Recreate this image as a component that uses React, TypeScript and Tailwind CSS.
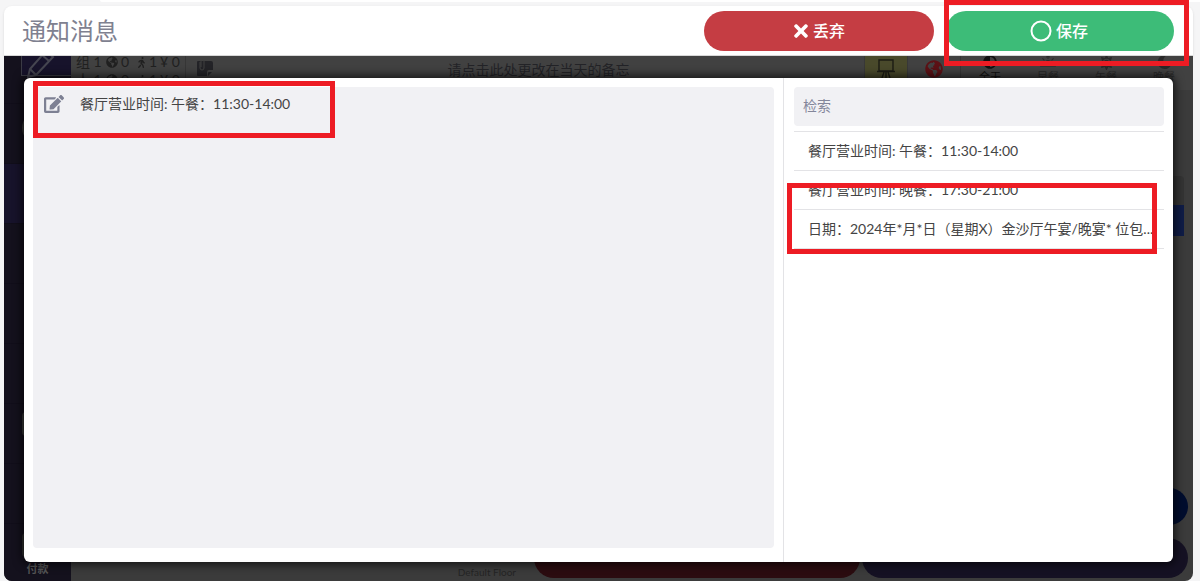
import { useState } from 'react';
import type { ReactNode } from 'react';
import { FaAdjust, FaEdit, FaGlobeAmericas, FaMoon, FaSun, FaTimes, FaWalking } from 'react-icons/fa';
import { BsSunriseFill } from 'react-icons/bs';

const MESSAGES = [
  '餐厅营业时间: 午餐：11:30-14:00',
  '餐厅营业时间: 晚餐：17:30-21:00',
  '日期：2024年*月*日（星期X）金沙厅午宴/晚宴* 位包...',
];

const MEALS = [
  { label: '全天', icon: <FaAdjust size={14} />, active: true },
  { label: '早餐', icon: <BsSunriseFill size={16} />, active: false },
  { label: '午餐', icon: <FaSun size={15} />, active: false },
  { label: '晚餐', icon: <FaMoon size={14} />, active: false },
];

function PencilIcon() {
  return (
    <svg className="h-8 w-8" viewBox="0 0 32 32" fill="none" stroke="currentColor" strokeWidth={2}>
      <path d="M4 29l2-8L22 3l7 6-17 18-8 2z" />
      <path d="M6 21l6 6M18 7l7 6" />
    </svg>
  );
}

function MemoIcon() {
  return (
    <svg className="h-[18px] w-4" viewBox="0 0 16 18">
      <path d="M1 2h13a2 2 0 012 2v7h-4a2 2 0 00-2 2v4H1a1 1 0 01-1-1V3a1 1 0 011-1z" fill="currentColor" />
      <path d="M11 17v-3a1 1 0 011-1h3z" fill="currentColor" />
      <path d="M3 3v6a2 2 0 004 0V2a1.500 1.500 0 00-3 0v6" fill="none" stroke="#414141" strokeWidth={1} />
    </svg>
  );
}

function EaselIcon() {
  return (
    <svg className="h-5 w-5" viewBox="0 0 20 20" fill="none" stroke="currentColor" strokeWidth={1.400}>
      <path d="M3 2h14v11H3zM1 13.500h18M8 14l-2 6M12 14l2 6M10 14v6" />
    </svg>
  );
}

function SidebarItem({ children, active }: { children?: ReactNode; active?: boolean }) {
  return (
    <div className={`flex h-[60px] shrink-0 flex-col items-center justify-center border-b border-[#110e1a] ${active ? 'bg-[#17132b]' : ''}`}>
      {children}
    </div>
  );
}

function Sidebar() {
  return (
    <nav className="flex w-[67px] shrink-0 flex-col overflow-hidden bg-[#14111d] text-[#3b3b3b]">
      <div className="h-12 shrink-0 border-b border-[#110e1a]">
        <div className="ml-[17px] h-7 border-b border-l border-[#3b3b45] bg-[#17132b] pl-[2px] text-[#454550]">
          <div className="-mt-2">
            <PencilIcon />
          </div>
        </div>
      </div>
      <SidebarItem>
        <div className="mb-3 h-8 w-8 rounded-full border-4 border-current" />
      </SidebarItem>
      <SidebarItem active />
      <SidebarItem />
      <SidebarItem />
      <SidebarItem />
      <SidebarItem>
        <div className="mb-5 h-6 w-8 rounded border-2 border-current" />
      </SidebarItem>
      <SidebarItem />
      <div className="flex flex-1 flex-col items-center justify-end pb-1 text-[11px] leading-4 font-bold text-[#555]">
        <div className="mb-1 h-6 w-8 rounded border-2 border-[#333]" />
        付款
      </div>
    </nav>
  );
}

function CounterRow({ label, values }: { label: string; values: [string, string, string] }) {
  return (
    <div className="grid grid-cols-[30px_30px_24px_20px] items-center text-[14px] leading-[10px]">
      <span>{label} {values[0]}</span>
      <span className="flex items-center gap-[3px]">
        <FaGlobeAmericas size={12} /> {values[1]}
      </span>
      <span className="flex items-center gap-[2px]">
        <FaWalking size={11} /> {values[2]}
      </span>
      <span>¥ 0</span>
    </div>
  );
}

function Topbar() {
  return (
    <div className="flex h-[34px] shrink-0 bg-[#414141]">
      <div className="flex w-[115px] shrink-0 flex-col gap-[6px] border-r border-[#363636] pl-[5px] text-[#202020]">
        <CounterRow label="组" values={['1', '0', '1']} />
        <CounterRow label="人" values={['1', '0', '1']} />
      </div>
      <div className="shrink-0 pt-[3px] pl-[11px] text-[#232327]">
        <MemoIcon />
      </div>
      <p className="flex-1 pt-1 text-center text-[14px] leading-5 text-[#232327]">请点击此处更改在当天的备忘</p>
      <div className="flex w-11 shrink-0 justify-center border-x border-[#383838] bg-[#49492b] pt-[2px] text-[#1c1c14]">
        <EaselIcon />
      </div>
      <div className="flex w-[53px] shrink-0 justify-center border-r border-[#363636] pt-1 text-[#5c1115]">
        <FaGlobeAmericas size={18} />
      </div>
      <div className="flex shrink-0">
        {MEALS.map(m => (
          <div
            key={m.label}
            className={`flex w-[58px] flex-col items-center text-[11px] leading-4 ${m.active ? 'text-[#111]' : 'text-[#292929]'}`}
          >
            <span className="-mt-px flex h-[14px] items-center">{m.icon}</span>
            {m.label}
          </div>
        ))}
      </div>
    </div>
  );
}

function FloorScreen() {
  return (
    <div className="flex h-full overflow-hidden rounded-b-lg bg-[#3b3b3b]">
      <Sidebar />
      <div className="flex min-w-0 flex-1 flex-col">
        <Topbar />
        <div className="flex flex-1 flex-col items-end pr-[9px]">
          <div className="mt-[86px] h-[29px] w-40 rounded-t bg-[#343434]" />
          <div className="h-[31px] w-40 bg-[#0f1c47]" />
        </div>
        <div className="flex justify-end pr-[5px]">
          <div className="h-[37px] w-[37px] rounded-full bg-[#000d2e]" />
        </div>
        <div className="mt-[13px] mb-[3px] flex gap-[2px] pr-[5px]">
          <span className="flex-1 self-end pr-4 text-right text-[10px] leading-3 text-[#242424]">Default Floor</span>
          <div className="h-10 w-[326px] rounded-full bg-[#2b0c10]" />
          <div className="h-10 w-[326px] rounded-full bg-[#151123]" />
        </div>
      </div>
    </div>
  );
}

function NoticeDialog() {
  const [query, setQuery] = useState('');
  const visible = MESSAGES.filter(m => m.includes(query));

  return (
    <div
      role="dialog"
      aria-label="通知消息"
      className="absolute top-[22px] right-5 bottom-[19px] left-5 flex rounded-md bg-white text-[14px] text-[#444] shadow-[0_0_10px_2px_rgba(0,0,0,0.7)]"
    >
      {/* Selected messages */}
      <div className="flex min-w-0 flex-1 flex-col px-[9px] pt-[9px] pb-[14px]">
        <div className="flex-1 rounded bg-[#f1f1f4]">
          <div className="flex h-[34px] items-center gap-4 pl-[11px]">
            <button type="button" aria-label="编辑" className="text-[#7d8093]">
              <FaEdit size={20} />
            </button>
            <span className="pb-[2px]">{MESSAGES[0]}</span>
          </div>
        </div>
      </div>

      {/* Templates */}
      <div className="w-[390px] shrink-0 border-l border-[#e3e3e6] pt-[9px] pr-[9px] pl-[10px]">
        <input
          type="text"
          aria-label="检索"
          placeholder="检索"
          value={query}
          onChange={e => setQuery(e.target.value)}
          className="block h-[39px] w-full rounded bg-[#f1f1f4] px-[9px] pb-[2px] placeholder:text-[#83869a] focus:outline-none"
        />
        <ul className="mt-[5px] border-t border-[#e3e3e6]">
          {visible.map(m => (
            <li key={m} className="border-b border-[#e3e3e6]">
              <button type="button" className="block h-[38px] w-full truncate pb-[2px] pl-[14px] text-left">
                {m}
              </button>
            </li>
          ))}
        </ul>
      </div>
    </div>
  );
}

export default function App() {
  return (
    <div className="relative flex h-screen flex-col overflow-hidden bg-[#f5f5f6] font-['Lato','Noto_Sans_CJK_SC',sans-serif]">
      <div className="mb-1 ml-[100px] h-[2px] shrink-0 rounded-bl bg-white" />
      <div className="mr-[7px] ml-1 flex min-h-0 flex-1 flex-col">
        <header className="flex h-[50px] shrink-0 items-center gap-3 rounded-t-lg border-b border-[#d8d8d8] bg-white pr-[19px] pl-[18px] shadow-sm">
          <h1 className="flex-1 text-2xl text-[#7f8190]">通知消息</h1>
          <button
            type="button"
            className="flex h-10 w-[230px] items-center justify-center gap-[2px] rounded-full bg-[#c53d43] pr-[2px] font-medium text-white"
          >
            <FaTimes size={20} />
            丢弃
          </button>
          <button
            type="button"
            className="flex h-10 w-[228px] items-center justify-center gap-1 rounded-full bg-[#3dbc78] pr-[2px] font-medium text-white"
          >
            <svg className="h-[22px] w-[22px]" viewBox="0 0 22 22" fill="none" stroke="currentColor" strokeWidth={2}>
              <circle cx="11" cy="11" r="9.500" />
            </svg>
            保存
          </button>
        </header>
        <main className="relative min-h-0 flex-1">
          <FloorScreen />
          <NoticeDialog />
        </main>
      </div>

      {/* Highlight frames */}
      <div className="pointer-events-none absolute top-0 right-[11px] h-[66px] w-[245px] border-[5px] border-[#ed1c24]" />
      <div className="pointer-events-none absolute top-[81px] left-[33px] h-[57px] w-[302px] border-[5px] border-[#ed1c24]" />
      <div className="pointer-events-none absolute top-[183px] right-[43px] h-[71px] w-[370px] border-[5px] border-[#ed1c24]" />
    </div>
  );
}
